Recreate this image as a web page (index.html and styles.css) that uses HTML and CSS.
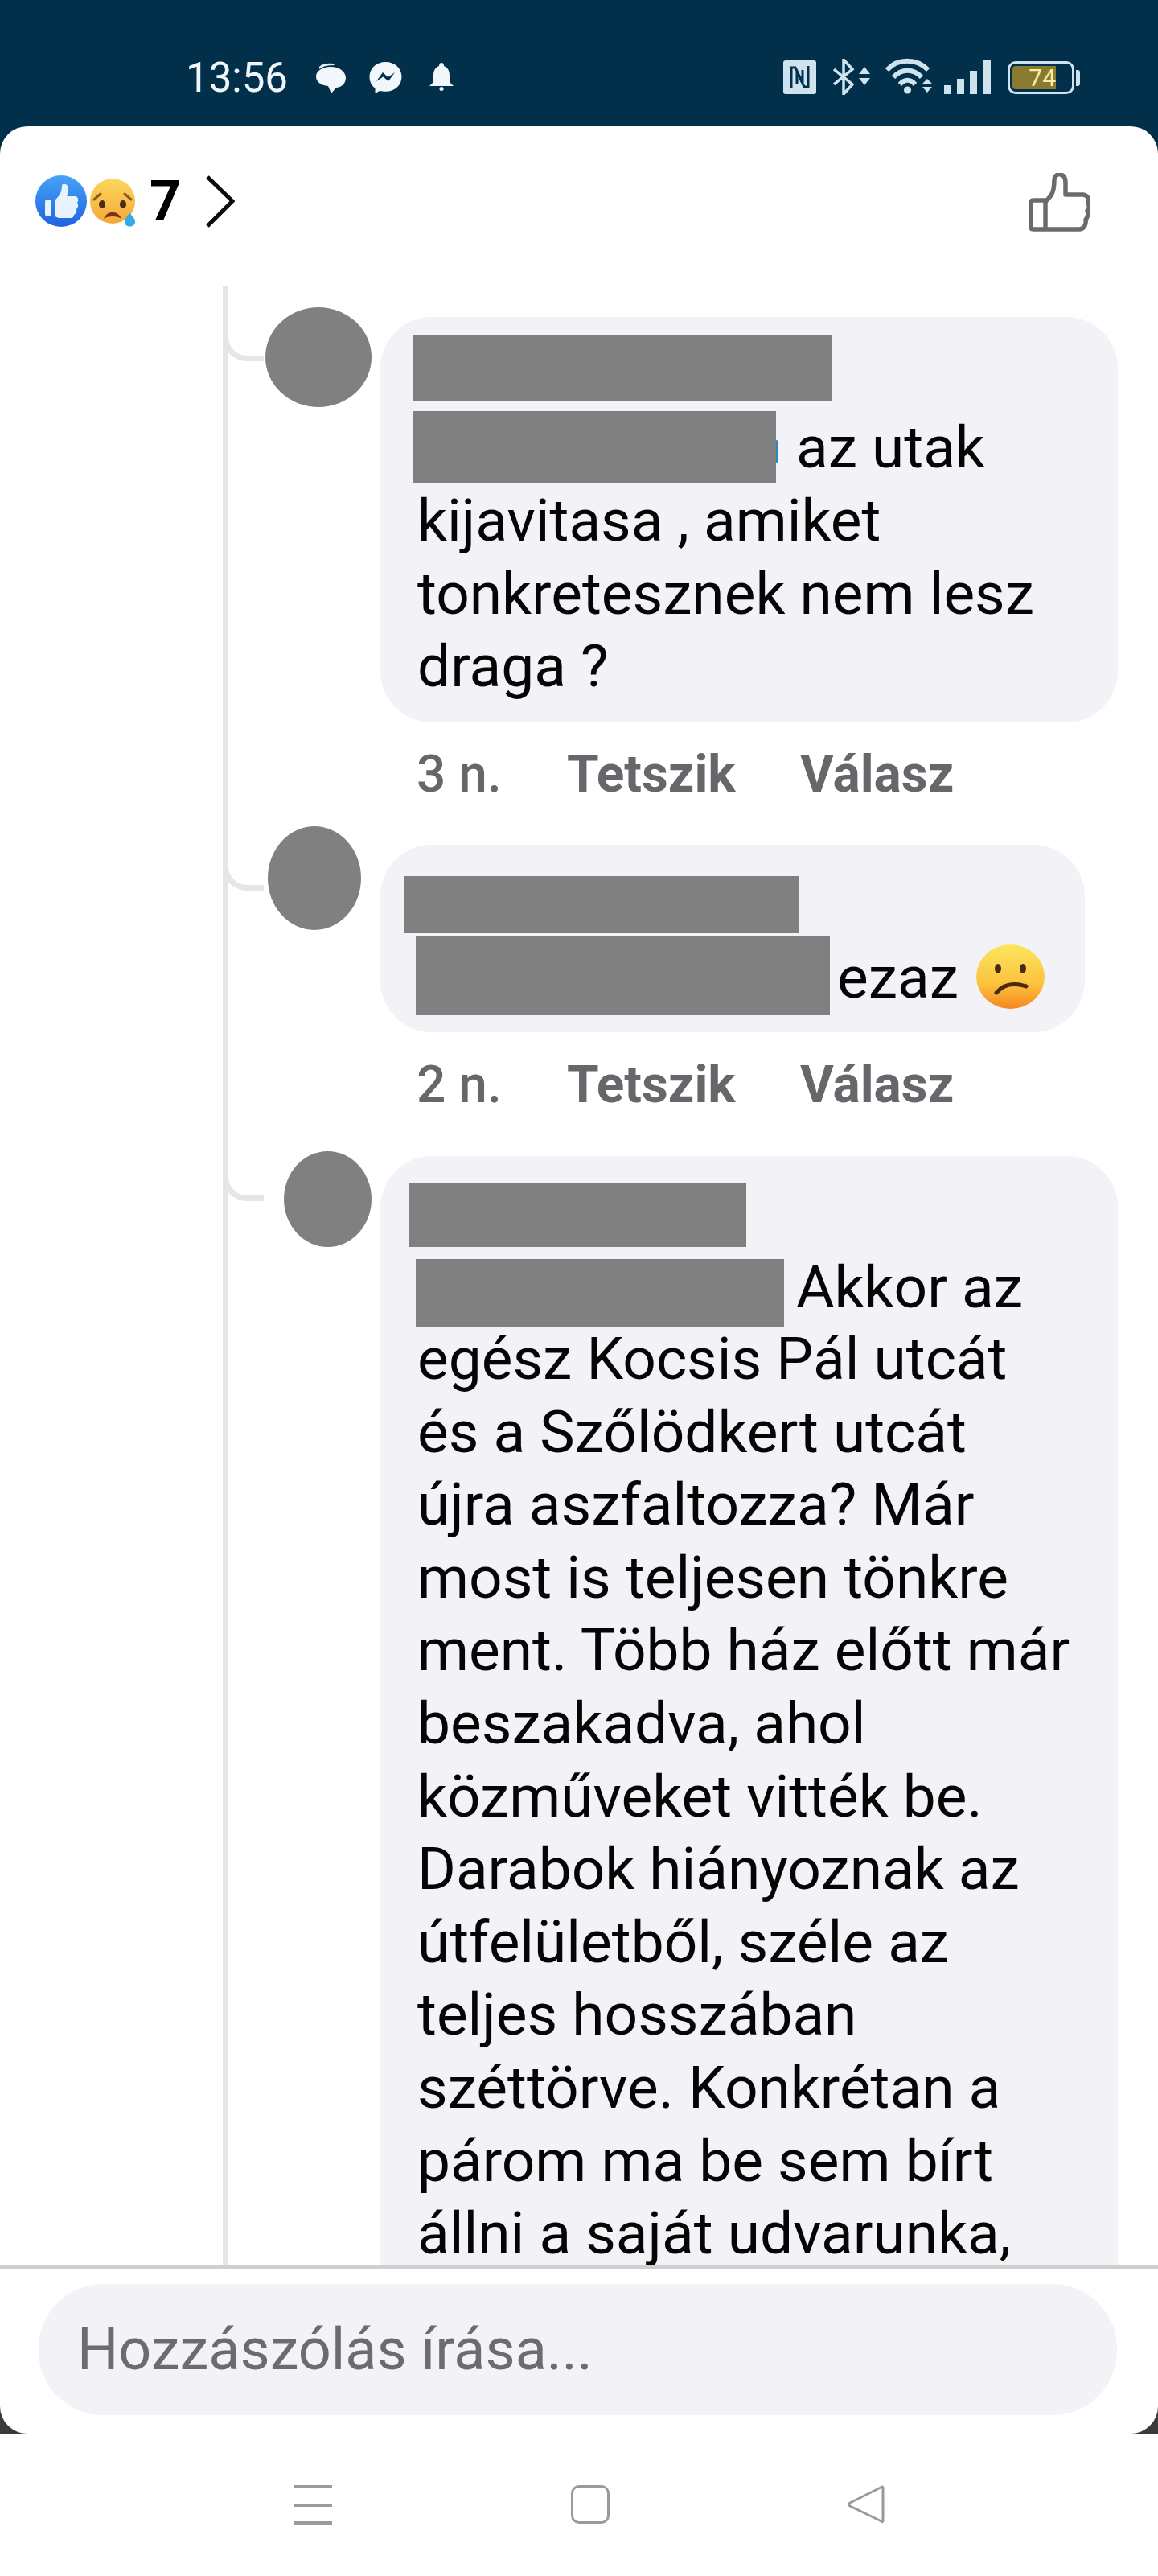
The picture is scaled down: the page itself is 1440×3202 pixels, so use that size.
FILE: index.html
```html
<!DOCTYPE html>
<html lang="hu">
<head>
    <meta charset="UTF-8">
    <meta name="viewport" content="width=device-width, initial-scale=1.0">
    <title>Hozzászólások</title>
    <link rel="stylesheet" href="styles.css">
</head>
<body>
<div class="screen">
    <div class="status-bar">
        <div class="status-left">
            <span class="time">13:56</span>
            <svg class="ic-chat" viewBox="0 0 38 38"><path d="M5 5 Q10 0 22 1 L24 3 Q10 3 5 8Z" fill="#e6f1f6"/><path d="M19 5 C30 5 38 11 38 19 C38 27 31 31 26 31 L20 38 L16 29 C7 28 1 24 1 17 C1 10 9 5 19 5Z" fill="#f1f7fa"/></svg>
            <svg class="ic-messenger" viewBox="0 0 41 40"><path d="M20.500 1 C9 1 0.500 9 0.500 19.500 C0.500 25.500 3 30.500 7.500 33.800 V40 L13.500 36.800 C15.500 37.400 18 37.800 20.500 37.800 C32 37.800 40.500 30 40.500 19.500 C40.500 9 32 1 20.500 1Z" fill="#f1f7fa"/><path d="M9 25 L17 14 L23.500 20 L32 14 L24 25 L17.500 19.500Z" fill="#02304a"/></svg>
            <svg class="ic-bell" viewBox="0 0 30 35"><path d="M15 0 C17 0 18 2 18 4 C23 6 25 10 25 16 V24 L30 29 H0 L5 24 V16 C5 10 7 6 12 4 C12 2 13 0 15 0Z" fill="#f1f7fa"/><circle cx="15" cy="32.500" r="2.500" fill="#f1f7fa"/></svg>
        </div>
        <div class="status-right">
            <svg class="ic-nfc" viewBox="0 0 41 42"><rect width="41" height="42" rx="3" fill="#cfe3ef"/><path d="M10 35 V9 H15 L24 28 V12 M31 7 V33 H26 L17 14 V30" fill="none" stroke="#02304a" stroke-width="3"/></svg>
            <svg class="ic-bt" viewBox="0 0 47 45"><path d="M1 13 L24 32 L13 44 V1 L24 13 L1 32" fill="none" stroke="#cfe3ef" stroke-width="3.500"/><path d="M32 19 L39 10 L46 19Z M32 24 H46 L39 33Z" fill="#cfe3ef"/></svg>
            <svg class="ic-wifi" viewBox="0 0 59 45"><g fill="none" stroke="#cfe3ef" stroke-width="6"><path d="M2 15 C15 0 39 0 53 15"/><path d="M10 24 C20 13 35 13 45 24"/><path d="M18 33 C24 26 31 26 37 33"/></g><circle cx="27.500" cy="40" r="4.500" fill="#cfe3ef"/><path d="M46 32 L52 26 L58 32Z M46 36 H58 L52 43Z" fill="#cfe3ef"/></svg>
            <svg class="ic-signal" viewBox="0 0 58 42"><g fill="#cfe3ef"><rect x="0" y="31" width="9" height="11"/><rect x="16" y="23" width="9" height="19"/><rect x="32" y="13" width="9" height="29"/><rect x="49" y="0" width="9" height="42"/></g></svg>
            <div class="battery">
                <div class="battery-body"><div class="battery-fill">74</div></div>
                <div class="battery-nub"></div>
            </div>
        </div>
    </div>

    <div class="card">
        <div class="card-head">
            <svg class="ic-like" viewBox="0 0 64 64">
                <defs><linearGradient id="likeBg" x1="0" y1="0" x2="0" y2="1"><stop offset="0" stop-color="#46a3f5"/><stop offset="1" stop-color="#1f63e0"/></linearGradient></defs>
                <circle cx="32" cy="32" r="32" fill="url(#likeBg)"/>
                <rect x="12" y="30" width="8" height="21" rx="3" fill="#e9f3ff"/>
                <path d="M24 31 C30 26 33 20 33 13 C33 10 38 10 40 13 C42 17 41 22 39 26 H49 C54 26 54 32 52 34 C54 37 53 40 51 42 C52 45 50 48 48 49 C48 52 46 53 43 53 H31 C27 53 24 51 24 49Z" fill="#e9f3ff"/>
            </svg>
            <svg class="ic-sad" viewBox="0 0 58 64">
                <defs><linearGradient id="sadBg" x1="0" y1="0" x2="0" y2="1"><stop offset="0" stop-color="#fcd65c"/><stop offset="1" stop-color="#f5a83a"/></linearGradient></defs>
                <circle cx="28" cy="32" r="28" fill="url(#sadBg)"/>
                <path d="M5 30 L13 23 M51 30 L43 23" stroke="#8a5a20" stroke-width="3" stroke-linecap="round"/>
                <ellipse cx="15" cy="36" rx="4" ry="5" fill="#4a2c14"/>
                <ellipse cx="41" cy="36" rx="4" ry="5" fill="#4a2c14"/>
                <path d="M17 54 C21 43 35 43 39 54 C34 50 22 50 17 54Z" fill="#7a3315"/>
                <path d="M49 46 C52 51 57 54 56 59 C55 65 44 65 43 59 C42 54 47 51 49 46Z" fill="#36a9e8"/>
            </svg>
            <span class="count">7</span>
            <svg class="ic-chevron" viewBox="0 0 37 65"><path d="M3 2 L34 32 L3 63" fill="none" stroke="#0a0a0a" stroke-width="5"/></svg>
            <svg class="ic-thumb" viewBox="0 0 75 73"><path d="M20 70 V36 L27 28 C31 22 31 14 31 8 C32 2 37 1 39 2 C44 3 45 7 45 12 V27 H67 C73 28 74 32 73 37 C75 41 74 45 72 47 C74 51 72 56 70 58 C71 64 68 70 62 70Z M5 34 H20 V70 H5 C3 70 2 69 2 67 V37 C2 35 3 34 5 34Z" fill="none" stroke="#6b6b6b" stroke-width="5.500" stroke-linejoin="round"/></svg>
        </div>

        <div class="thread">
            <div class="comment comment-a">
                <div class="avatar"></div>
                <div class="comment-body">
                    <div class="bubble">
                        <div class="redact name"></div>
                        <div class="first-row">
                            <div class="redact mention"></div>
                            <span class="tail">az utak</span>
                        </div>
                        <p>kijavitasa , amiket<br>tonkretesznek nem lesz<br>draga ?</p>
                    </div>
                    <div class="meta"><span class="age">3 n.</span><b class="act-like">Tetszik</b><b>Válasz</b></div>
                </div>
            </div>

            <div class="comment comment-b">
                <div class="avatar"></div>
                <div class="comment-body">
                    <div class="bubble">
                        <div class="redact name"></div>
                        <div class="first-row">
                            <div class="redact mention"></div>
                            <span class="tail">ezaz</span>
                            <svg class="ic-frown" viewBox="0 0 85 80">
                                <defs><linearGradient id="frownBg" x1="0" y1="0" x2="0" y2="1"><stop offset="0" stop-color="#fde45f"/><stop offset="0.6" stop-color="#fcc43e"/><stop offset="1" stop-color="#f5861f"/></linearGradient></defs>
                                <ellipse cx="42.500" cy="40" rx="42.500" ry="40" fill="url(#frownBg)"/>
                                <ellipse cx="27" cy="30" rx="4" ry="6" fill="#4a2a12"/>
                                <ellipse cx="58" cy="30" rx="4" ry="6" fill="#4a2a12"/>
                                <path d="M25 60 C33 50 46 47 62 52" fill="none" stroke="#4a2a12" stroke-width="5" stroke-linecap="round"/>
                            </svg>
                        </div>
                    </div>
                    <div class="meta"><span class="age">2 n.</span><b class="act-like">Tetszik</b><b>Válasz</b></div>
                </div>
            </div>

            <div class="comment comment-c">
                <div class="avatar"></div>
                <div class="comment-body">
                    <div class="bubble">
                        <div class="redact name"></div>
                        <div class="first-row">
                            <div class="redact mention"></div>
                            <span class="tail">Akkor az</span>
                        </div>
                        <p>egész Kocsis Pál utcát<br>és a Szőlödkert utcát<br>újra aszfaltozza? Már<br>most is teljesen tönkre<br>ment. Több ház előtt már<br>beszakadva, ahol<br>közműveket vitték be.<br>Darabok hiányoznak az<br>útfelületből, széle az<br>teljes hosszában<br>széttörve. Konkrétan a<br>párom ma be sem bírt<br>állni a saját udvarunka,</p>
                    </div>
                </div>
            </div>
        </div>

        <div class="composer">
            <div class="composer-input">Hozzászólás írása...</div>
        </div>
    </div>

    <div class="nav-bar">
        <div class="nav-menu"><span></span><span></span><span></span></div>
        <div class="nav-home"></div>
        <svg class="nav-back" viewBox="0 0 46 48"><path d="M43 2 C44 2 44 3 44 4 V44 C44 46 43 46 42 45 L3 26 C1 25 1 23 3 22 Z" fill="none" stroke="#9a9a9a" stroke-width="3" stroke-linejoin="round"/></svg>
    </div>
</div>
</body>
</html>
```
FILE: styles.css
```css
body {
    margin: 0;
    padding: 0;
    font-family: Roboto, "Liberation Sans", sans-serif;
    color: #050505;
}
p {
    margin: 0;
}
.screen {
    width: 1440px;
    height: 3202px;
    overflow: hidden;
    display: flex;
    flex-direction: column;
    background: linear-gradient(#02304a 0, #02304a 300px, #3a3a3a 300px);
}

/* status bar */
.status-bar {
    height: 157px;
    flex-shrink: 0;
    box-sizing: border-box;
    padding: 71px 97px 0 231px;
    display: flex;
    justify-content: space-between;
    align-items: flex-start;
}
.status-left {
    display: flex;
    align-items: flex-start;
}
.time {
    width: 161px;
    font-size: 51px;
    line-height: 51px;
    color: #eef6fa;
}
.ic-chat {
    width: 38px;
    height: 38px;
    margin-top: 7px;
}
.ic-messenger {
    width: 41px;
    height: 40px;
    margin: 5px 0 0 29px;
}
.ic-bell {
    width: 30px;
    height: 35px;
    margin: 7px 0 0 34px;
}
.status-right {
    display: flex;
    align-items: flex-start;
}
.ic-nfc {
    width: 41px;
    height: 42px;
    margin-top: 4px;
}
.ic-bt {
    width: 47px;
    height: 45px;
    margin-left: 21px;
    margin-top: 2px;
}
.ic-wifi {
    width: 59px;
    height: 45px;
    margin-left: 18px;
    margin-top: 1px;
}
.ic-signal {
    width: 58px;
    height: 42px;
    margin: 4px 0 0 14px;
}
.battery {
    display: flex;
    align-items: center;
    margin: 5px 0 0 21px;
}
.battery-body {
    width: 83px;
    height: 41px;
    box-sizing: border-box;
    border: 3px solid #cfe3ef;
    border-radius: 10px;
    padding: 3px;
}
.battery-fill {
    width: 54px;
    height: 29px;
    background: #8a7a30;
    border-radius: 4px 0 0 4px;
    color: #f6efa6;
    font-size: 30px;
    line-height: 29px;
    text-align: right;
}
.battery-nub {
    width: 5px;
    height: 20px;
    margin-left: 2px;
    background: #cfe3ef;
    border-radius: 0 3px 3px 0;
}

/* card */
.card {
    height: 2868px;
    flex-shrink: 0;
    background: #fff;
    border-radius: 34px;
    display: flex;
    flex-direction: column;
}
.card-head {
    height: 198px;
    flex-shrink: 0;
    box-sizing: border-box;
    padding: 58px 85px 0 44px;
    display: flex;
    align-items: flex-start;
}
.ic-like {
    width: 64px;
    height: 64px;
    margin-top: 3px;
}
.ic-sad {
    width: 58px;
    height: 64px;
    margin: 3px 0 0 4px;
}
.count {
    margin-left: 16px;
    font-size: 68px;
    font-weight: 700;
    line-height: 70px;
    color: #000;
}
.ic-chevron {
    width: 37px;
    height: 65px;
    margin: 3px 0 0 30px;
}
.ic-thumb {
    width: 75px;
    height: 73px;
    margin-left: auto;
}

/* comment thread */
.thread {
    height: 2461px;
    flex-shrink: 0;
    box-sizing: border-box;
    margin-left: 277px;
    padding-top: 27px;
    border-left: 7px solid #e6e6e8;
    overflow: hidden;
}
.comment {
    position: relative;
    display: grid;
    grid-template-columns: 189px 1fr;
    align-items: start;
}
.comment::before {
    content: "";
    position: absolute;
    left: -7px;
    width: 44px;
    height: 50px;
    border-left: 7px solid #e6e6e8;
    border-bottom: 7px solid #e6e6e8;
    border-bottom-left-radius: 30px;
}
.avatar {
    background: #808080;
    border-radius: 50%;
}
.bubble {
    box-sizing: border-box;
    background: #f2f2f7;
    border-radius: 64px;
    font-size: 73px;
    line-height: 90.6px;
}
.redact {
    background: #808080;
    flex-shrink: 0;
}
.first-row {
    display: flex;
    align-items: flex-start;
}
.bubble p {
    padding-left: 46px;
}
.meta {
    display: flex;
    padding-left: 45px;
    font-size: 64px;
    line-height: 80px;
    color: #65676b;
}
.meta b {
    font-weight: 700;
}
.age {
    width: 187px;
    font-weight: 500;
}
.act-like {
    width: 290px;
}

.comment-a {
    height: 645px;
}
.comment-a::before {
    top: 10px;
}
.comment-a .avatar {
    width: 132px;
    height: 124px;
    margin-left: 46px;
}
.comment-a .comment-body {
    margin-top: 12px;
}
.comment-a .bubble {
    width: 917px;
    height: 504px;
    padding-top: 23px;
}
.comment-a .name {
    width: 520px;
    height: 82px;
    margin-left: 41px;
}
.comment-a .first-row {
    height: 91px;
    margin-top: 12px;
}
.comment-a .mention {
    position: relative;
    width: 451px;
    height: 89px;
    margin-left: 41px;
}
.comment-a .mention::after {
    content: "";
    position: absolute;
    right: -3px;
    top: 36px;
    width: 3px;
    height: 28px;
    background: #2a86c4;
    border-radius: 0 6px 6px 0;
}
.comment-a .tail {
    margin-left: 25px;
}
.comment-a .meta {
    margin-top: 25px;
}

.comment-b {
    height: 404px;
}
.comment-b::before {
    top: 23px;
}
.comment-b .avatar {
    width: 116px;
    height: 129px;
    margin-left: 49px;
}
.comment-b .comment-body {
    margin-top: 23px;
}
.comment-b .bubble {
    width: 876px;
    height: 233px;
    padding-top: 39px;
}
.comment-b .name {
    width: 492px;
    height: 71px;
    margin-left: 29px;
}
.comment-b .first-row {
    margin-top: 4px;
}
.comment-b .mention {
    width: 515px;
    height: 98px;
    margin-left: 44px;
}
.comment-b .tail {
    margin: 6px 0 0 9px;
}
.ic-frown {
    width: 85px;
    height: 80px;
    margin: 10px 0 0 22px;
}
.comment-b .meta {
    margin-top: 26px;
}

.comment-c::before {
    top: 5px;
}
.comment-c .avatar {
    width: 109px;
    height: 119px;
    margin-left: 69px;
}
.comment-c .comment-body {
    margin-top: 6px;
}
.comment-c .bubble {
    width: 917px;
    height: 1500px;
    padding-top: 34px;
}
.comment-c .name {
    width: 420px;
    height: 79px;
    margin-left: 35px;
}
.comment-c .first-row {
    height: 79px;
    margin-top: 15px;
}
.comment-c .mention {
    width: 458px;
    height: 85px;
    margin-left: 44px;
}
.comment-c .tail {
    margin: -10px 0 0 15px;
}

/* composer */
.composer {
    height: 209px;
    flex-shrink: 0;
    box-sizing: border-box;
    border-top: 4px solid #cfcfcf;
    padding: 19px 51px 0 48px;
}
.composer-input {
    height: 163px;
    box-sizing: border-box;
    padding-left: 48px;
    background: #f2f2f7;
    border-radius: 80px;
    font-size: 72px;
    line-height: 163px;
    color: #6b6c70;
}

/* navigation bar */
.nav-bar {
    flex: 1;
    background: #fff;
    box-sizing: border-box;
    padding: 64px 0 0 365px;
    display: flex;
    align-items: flex-start;
}
.nav-menu {
    width: 48px;
    height: 49px;
    display: flex;
    flex-direction: column;
    justify-content: space-between;
}
.nav-menu span {
    height: 4px;
    background: #9a9a9a;
}
.nav-home {
    width: 48px;
    height: 48px;
    box-sizing: border-box;
    margin-left: 297px;
    border: 3px solid #9a9a9a;
    border-radius: 10px;
}
.nav-back {
    width: 46px;
    height: 48px;
    margin-left: 296px;
}
```
